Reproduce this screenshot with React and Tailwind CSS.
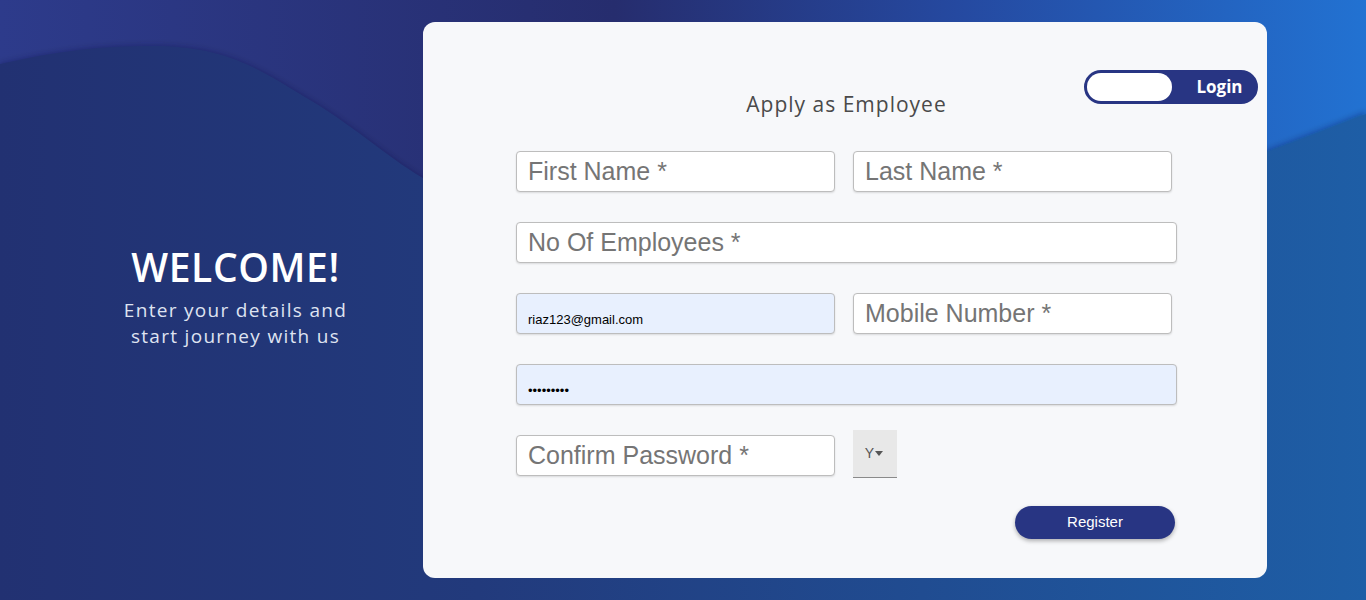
import React from 'react';

const headFont = { fontFamily: '"Open Sans", "Noto Sans", sans-serif' };

const Field = ({ placeholder, value, type = 'text', wide = false, filled = false }) => (
    <input
        type={type}
        placeholder={placeholder}
        defaultValue={value}
        className={
            filled
                ? `${wide ? 'w-[661px]' : 'w-[319px]'} h-[41px] rounded-[4px] border border-[#bdbdbd] bg-[#e8f0fe] px-[11px] pt-[11px] text-[13px] text-black shadow-[0_1px_2px_rgba(0,0,0,0.12)] outline-none`
                : `${wide ? 'w-[661px]' : 'w-[319px]'} h-[41px] rounded-[4px] border border-[#bdbdbd] bg-white px-[11px] text-[25px] text-[#555] placeholder:text-[#757575] shadow-[0_1px_2px_rgba(0,0,0,0.12)] outline-none`
        }
        style={{ fontFamily: '"Liberation Sans", Arial, sans-serif' }}
    />
);

export default function App() {
    return (
        <div className="relative w-full h-[600px] overflow-hidden bg-[#252d6e]">
            {/* Background waves */}
            <svg className="absolute inset-0" width="1366" height="600" viewBox="0 0 1366 600" preserveAspectRatio="none">
                <defs>
                    <linearGradient id="top" x1="0" y1="0" x2="1" y2="0">
                        <stop offset="0" stopColor="#2d3b8b" />
                        <stop offset="0.45" stopColor="#262d6e" />
                        <stop offset="0.7" stopColor="#2549a0" />
                        <stop offset="1" stopColor="#2272d2" />
                    </linearGradient>
                    <linearGradient id="wave" x1="0" y1="0" x2="1" y2="0">
                        <stop offset="0" stopColor="#223172" />
                        <stop offset="0.35" stopColor="#223a7c" />
                        <stop offset="1" stopColor="#1e5ea6" />
                    </linearGradient>
                    <filter id="blur" x="-5%" y="-5%" width="110%" height="110%">
                        <feGaussianBlur stdDeviation="3" />
                    </filter>
                </defs>
                <rect width="1366" height="600" fill="url(#top)" />
                <path
                    d="M0,64 C60,50 110,45 160,46 C230,48 260,70 310,100 C360,130 390,160 430,182 C700,330 1000,260 1366,112 L1366,600 L0,600 Z"
                    fill="rgba(10,20,60,0.35)"
                    filter="url(#blur)"
                />
                <path
                    d="M0,64 C60,50 110,45 160,46 C230,48 260,70 310,100 C360,130 390,160 430,182 C700,330 1000,260 1366,114 L1366,600 L0,600 Z"
                    fill="url(#wave)"
                />
            </svg>

            <div className="relative flex h-full">
                {/* Left welcome */}
                <div className="w-[423px] flex flex-col items-center justify-center pl-[48px] pb-[4px] text-center" style={headFont}>
                    <h1 className="text-[39px] leading-[40px] font-semibold text-white tracking-[0.6px]">WELCOME!</h1>
                    <p className="mt-[10px] text-[19px] leading-[26px] text-[#dfe3f1] tracking-[1.3px]">
                        Enter your details and
                        <br />
                        start journey with us
                    </p>
                </div>

                {/* Card */}
                <div className="relative mt-[22px] w-[844px] h-[556px] rounded-[12px] bg-[#f7f8fa]">
                    <div className="absolute top-[48px] right-[9px] flex items-center w-[174px] h-[34px] rounded-full border-[3px] border-[#283583] bg-[#283583]">
                        <div className="w-[85px] h-full rounded-full bg-white" />
                        <span className="flex-1 text-center pl-[12px] text-[17px] font-bold text-white" style={headFont}>
                            Login
                        </span>
                    </div>

                    <div className="flex flex-col pl-[93px] pt-[68px]">
                        <h2 className="w-[661px] text-center text-[21px] leading-[28px] text-[#4a4a4a] tracking-[1px]" style={headFont}>
                            Apply as Employee
                        </h2>

                        <div className="mt-[33px] flex flex-col gap-[30px]">
                            <div className="flex gap-[18px]">
                                <Field placeholder="First Name *" />
                                <Field placeholder="Last Name *" />
                            </div>
                            <Field placeholder="No Of Employees *" wide />
                            <div className="flex gap-[18px]">
                                <Field value="riaz123@gmail.com" filled />
                                <Field placeholder="Mobile Number *" />
                            </div>
                            <Field type="password" value="123456789" wide filled />
                            <div className="flex items-start gap-[18px]">
                                <Field placeholder="Confirm Password *" />
                                <div className="-mt-[5px] flex items-center justify-center gap-[1px] w-[44px] h-[48px] bg-[#e8e8e8] border-b border-[#8a8a8a] text-[14px] text-[#555] pr-[2px]" style={{ fontFamily: '"Liberation Sans", Arial, sans-serif' }}>
                                    <span>Y</span>
                                    <svg width="8" height="6" viewBox="0 0 8 6" className="mt-[1px]">
                                        <path d="M0 0 L8 0 L4 5 Z" fill="#555" />
                                    </svg>
                                </div>
                            </div>
                        </div>

                        <div className="mt-[28px] w-[659px] flex justify-end">
                            <button
                                className="w-[160px] h-[33px] rounded-full bg-[#283583] text-white text-[15px] shadow-[0_2px_4px_rgba(0,0,0,0.3)]"
                                style={{ fontFamily: '"Liberation Sans", Arial, sans-serif' }}
                            >
                                Register
                            </button>
                        </div>
                    </div>
                </div>
            </div>
        </div>
    );
}
